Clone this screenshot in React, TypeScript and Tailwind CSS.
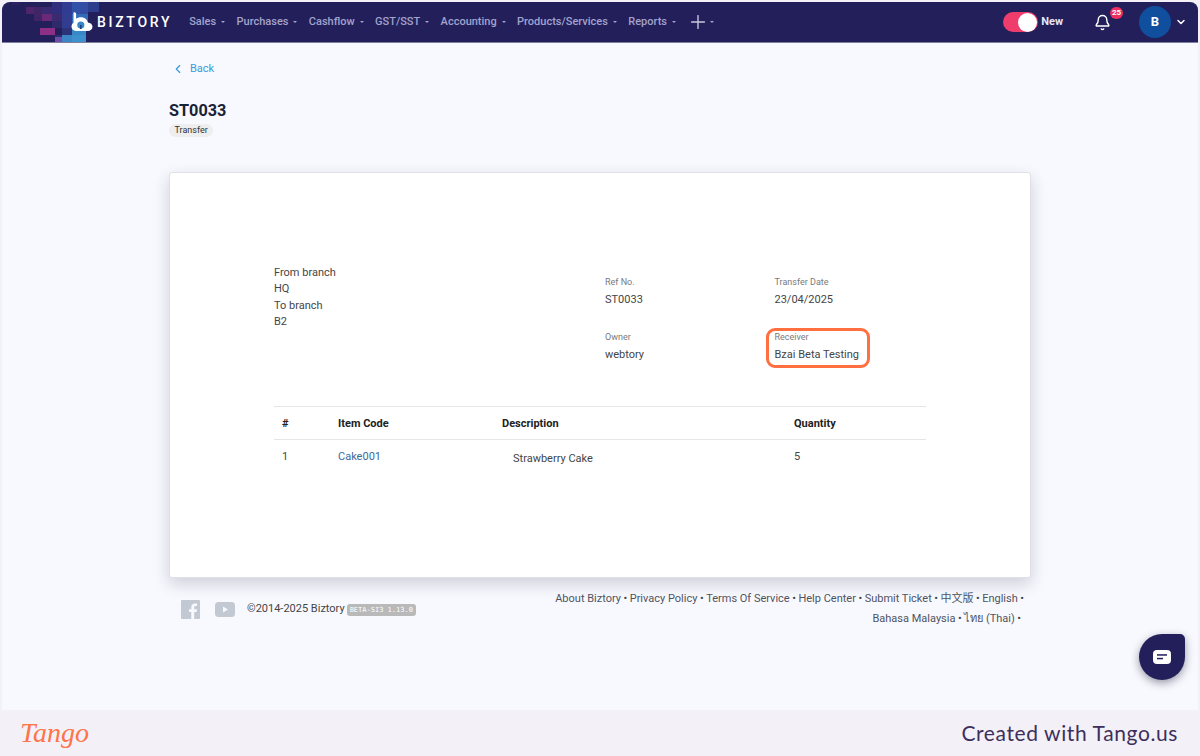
import { Bell, ChevronDown, ChevronLeft, Plus } from "lucide-react";

const navItems = ["Sales", "Purchases", "Cashflow", "GST/SST", "Accounting", "Products/Services", "Reports"];

const footerLine1 = ["About Biztory", "Privacy Policy", "Terms Of Service", "Help Center", "Submit Ticket", "中文版", "English"];
const footerLine2 = ["Bahasa Malaysia", "ไทย (Thai)"];

// mosaic behind the logo: x, y, w, h, colour
const mosaic: [number, number, number, number, string][] = [
  [10, 0, 8, 3, "#2c2260"],
  [24, 5, 8, 7, "#4e2569"],
  [32, 5, 8, 7, "#3f2466"],
  [40, 5, 10, 7, "#3a2a72"],
  [50, 0, 10, 12, "#302d7c"],
  [60, 0, 10, 12, "#303c92"],
  [70, 0, 8, 12, "#3150a8"],
  [78, 0, 8, 12, "#314ca2"],
  [86, 0, 11, 10, "#2d3d8c"],
  [32, 12, 8, 7, "#3f2466"],
  [40, 12, 10, 7, "#6b2a78"],
  [50, 12, 10, 7, "#3c2a6e"],
  [60, 12, 10, 14, "#323c90"],
  [70, 12, 16, 14, "#336cb6"],
  [50, 19, 10, 7, "#2f2a6c"],
  [38, 26, 15, 7, "#8d2f85"],
  [60, 26, 10, 7, "#2d3378"],
  [70, 26, 14, 7, "#3688c8"],
  [53, 33, 7, 7, "#2f2f6e"],
  [60, 33, 10, 7, "#3d86c6"],
  [53, 35, 7, 5, "#6c4fa6"],
  [70, 33, 14, 7, "#3c90cc"],
];

function Mosaic() {
  return (
    <svg width="98" height="40" viewBox="0 0 98 40" className="absolute left-0 top-0">
      {mosaic.map(([x, y, w, h, c], i) => (
        <rect key={i} x={x} y={y} width={w} height={h} fill={c} />
      ))}
    </svg>
  );
}

function BiztoryMark() {
  return (
    <svg width="24" height="24" viewBox="0 0 24 24" className="relative">
      <path
        d="M2.5 2.5c1.4-.8 2.6 0 2.6 1.6v4.6c1.4-1 3-1.5 4.8-1.5 3.6 0 6.3 2.2 7 5.3 2.6.2 4.6 2 4.6 4.2 0 2.4-2.1 4.2-4.8 4.2H5c-2.6 0-4.5-1.9-4.5-4.4 0-1.6.8-3 2-3.8V2.5z"
        fill="#fff"
      />
      <circle cx="9.8" cy="15" r="3.6" fill="#3a86c6" />
      <rect x="9" y="15" width="1.6" height="4" fill="#1f3f7a" />
    </svg>
  );
}

function Field({ label, value }: { label: string; value: string }) {
  return (
    <div className="h-[55px]">
      <div className="text-[9px] leading-[13px] text-[#7a7a7a]">{label}</div>
      <div className="mt-[3px] text-[11px] leading-[16px] text-[#454545]">{value}</div>
    </div>
  );
}

function Dot() {
  return <span className="mx-[2.5px] text-[#444]">•</span>;
}

export default function App() {
  return (
    <div
      className="relative flex h-[756px] w-[1200px] flex-col overflow-hidden bg-[#f3f1f7]"
      style={{ fontFamily: "Roboto, 'Noto Sans CJK SC', 'Noto Sans', sans-serif" }}
    >
      <div className="h-[710px] pt-[2px] px-[2px]">
        <div className="h-[708px] rounded-t-[8px] bg-[#f8f9fe]">
          {/* Top nav */}
          <header className="relative flex h-[40px] items-center overflow-hidden rounded-t-[8px] bg-[#221f5b] shadow-[0_1px_0_#7f7f9c]">
            <Mosaic />
            <div className="relative ml-[69px] flex items-center">
              <BiztoryMark />
              <span className="ml-[2px] text-[14px] font-medium tracking-[2.7px] text-white">BIZTORY</span>
            </div>
            <nav className="relative ml-[17px] flex items-center gap-[11.4px]">
              {navItems.map((item) => (
                <div key={item} className="flex items-center text-[11px] font-medium text-[#a3a3cb]">
                  {item}
                  <span className="ml-[5px] h-0 w-0 border-x-[2.5px] border-t-[2.5px] border-x-transparent border-t-[#a3a3cb]" />
                </div>
              ))}
              <div className="flex items-center">
                <Plus size={22} strokeWidth={1.5} className="text-[#c9c9e0]" />
                <span className="ml-[1px] h-0 w-0 border-x-[2.5px] border-t-[2.5px] border-x-transparent border-t-[#a3a3cb]" />
              </div>
            </nav>
            <div className="ml-auto flex items-center">
              <div className="flex h-[20px] w-[35px] items-center justify-end rounded-full bg-[#ee3d6c] pr-[1px]">
                <div className="h-[19px] w-[19px] rounded-full bg-white" />
              </div>
              <span className="ml-[3px] text-[11px] font-bold text-[#e8e8f2]">New</span>
              <div className="relative ml-[31px]">
                <Bell size={17} strokeWidth={2} className="text-white" />
                <span className="absolute left-[16px] top-[-7px] flex h-[12px] w-[13px] items-center justify-center rounded-full bg-[#ee2f5f] text-[8px] font-bold text-white">
                  25
                </span>
              </div>
              <div className="ml-[28px] flex h-[32px] w-[32px] items-center justify-center rounded-full bg-[#0f4f9e] text-[13px] font-bold text-white">
                B
              </div>
              <ChevronDown size={12} strokeWidth={3} className="ml-[4px] mr-[11px] text-white" />
            </div>
          </header>

          <main className="ml-[167px] w-[862px]">
            <div className="flex h-[35px] items-end pl-[2px] text-[11px] text-[#3a9ad9]">
              <ChevronLeft size={14} strokeWidth={2} className="mb-[1px]" />
              <span className="ml-[5px] leading-[16px]">Back</span>
            </div>
            <h1 className="mt-[22px] text-[16.25px] font-bold leading-[24px] text-[#1a2238]">ST0033</h1>
            <span className="mt-[1px] block w-fit rounded-full bg-[#eeeeee] px-[5.5px] text-[9px] leading-[13px] text-[#333]">
              Transfer
            </span>

            {/* Card */}
            <section className="mt-[35px] h-[406px] rounded-[3px] border border-[#dfe0e8] bg-white px-[104px] pt-[92px] shadow-[0_6px_16px_rgba(40,40,70,0.2)]">
              <div className="flex h-[141px]">
                <div className="w-[331px] text-[11px] leading-[16.3px] text-[#454545]">
                  <div>From branch</div>
                  <div>HQ</div>
                  <div>To branch</div>
                  <div>B2</div>
                </div>
                <div className="grid h-[110px] w-[320px] grid-cols-[169.5px_150.5px] pt-[11px]">
                  <Field label="Ref No." value="ST0033" />
                  <Field label="Transfer Date" value="23/04/2025" />
                  <Field label="Owner" value="webtory" />
                  <div className="relative">
                    <Field label="Receiver" value="Bzai Beta Testing" />
                    <div className="absolute left-[-8.5px] top-[-3px] h-[40px] w-[104px] rounded-[9px] border-[3px] border-[#ff6f3f]" />
                  </div>
                </div>
              </div>

              {/* Table */}
              <div className="grid h-[34px] grid-cols-[64px_164px_292px_132px] items-center border-y border-[#e6e6e6] pt-[2px] text-[11px] font-bold text-[#222]">
                <div className="pl-[8px]">#</div>
                <div>Item Code</div>
                <div>Description</div>
                <div>Quantity</div>
              </div>
              <div className="grid grid-cols-[64px_164px_292px_132px] pt-[9px] text-[11px] leading-[16px] text-[#454545]">
                <div className="pl-[8px]">1</div>
                <div className="text-[#3b6a9e]">Cake001</div>
                <div className="pl-[11px] pt-[2px]">Strawberry Cake</div>
                <div>5</div>
              </div>
            </section>

            {/* Footer */}
            <footer className="flex justify-between pt-[11px]">
              <div className="flex items-center self-start pl-[12px] pt-[11px]">
                <svg width="19" height="19" viewBox="0 0 19 19">
                  <rect width="19" height="19" rx="1" fill="#c3c9d2" />
                  <path d="M13.2 19v-7h2.4l.4-2.8h-2.8V7.5c0-.8.3-1.4 1.4-1.4H16V3.6c-.3 0-1.1-.1-2.1-.1-2.1 0-3.6 1.3-3.6 3.7v2H8V12h2.3v7h2.9z" fill="#f8f9fe" />
                </svg>
                <svg width="20" height="15" viewBox="0 0 20 15" className="ml-[15px]">
                  <rect width="20" height="15" rx="3.5" fill="#c3c9d2" />
                  <path d="M8 4.5l5 3-5 3z" fill="#f8f9fe" />
                </svg>
                <span className="ml-[12px] text-[11px] text-[#454545]">©2014-2025 Biztory</span>
                <span
                  className="ml-[2px] rounded-[3px] bg-[#b9b9b9] px-[3px] text-[7px] leading-[12px] text-white"
                  style={{ fontFamily: "'DejaVu Sans Mono', monospace" }}
                >
                  BETA-SI3 1.13.0
                </span>
              </div>
              <div className="mr-[4.5px] w-[480px] text-right text-[11px] leading-[19.5px] text-[#50535f]">
                <div>
                  {footerLine1.map((link) => (
                    <span key={link}>
                      {link}
                      <Dot />
                    </span>
                  ))}
                </div>
                <div className="pr-[3px]">
                  {footerLine2.map((link) => (
                    <span key={link}>
                      {link}
                      <Dot />
                    </span>
                  ))}
                </div>
              </div>
            </footer>
          </main>
        </div>
      </div>

      {/* Chat bubble */}
      <button className="absolute left-[1139px] top-[634px] flex h-[46px] w-[46px] items-center justify-center rounded-[23px] rounded-tr-[5px] bg-[#221f5b] shadow-[0_3px_8px_rgba(30,30,60,0.45)]">
        <svg width="18" height="14" viewBox="0 0 18 14">
          <rect width="18" height="14" rx="4" fill="#fff" />
          <rect x="4" y="4.2" width="10" height="1.5" fill="#221f5b" />
          <rect x="4" y="7.8" width="6" height="1.5" fill="#221f5b" />
        </svg>
      </button>

      {/* Tango bar */}
      <div className="flex h-[46px] items-center justify-between pl-[20px] pr-[22px]">
        <span
          className="text-[28px] italic leading-none text-[#ff7448]"
          style={{ fontFamily: "'Liberation Serif', serif" }}
        >
          Tango
        </span>
        <span
          className="text-[21px] tracking-[0.6px] text-[#3d2f5c]"
          style={{ fontFamily: "Lato, sans-serif" }}
        >
          Created with Tango.us
        </span>
      </div>
    </div>
  );
}
